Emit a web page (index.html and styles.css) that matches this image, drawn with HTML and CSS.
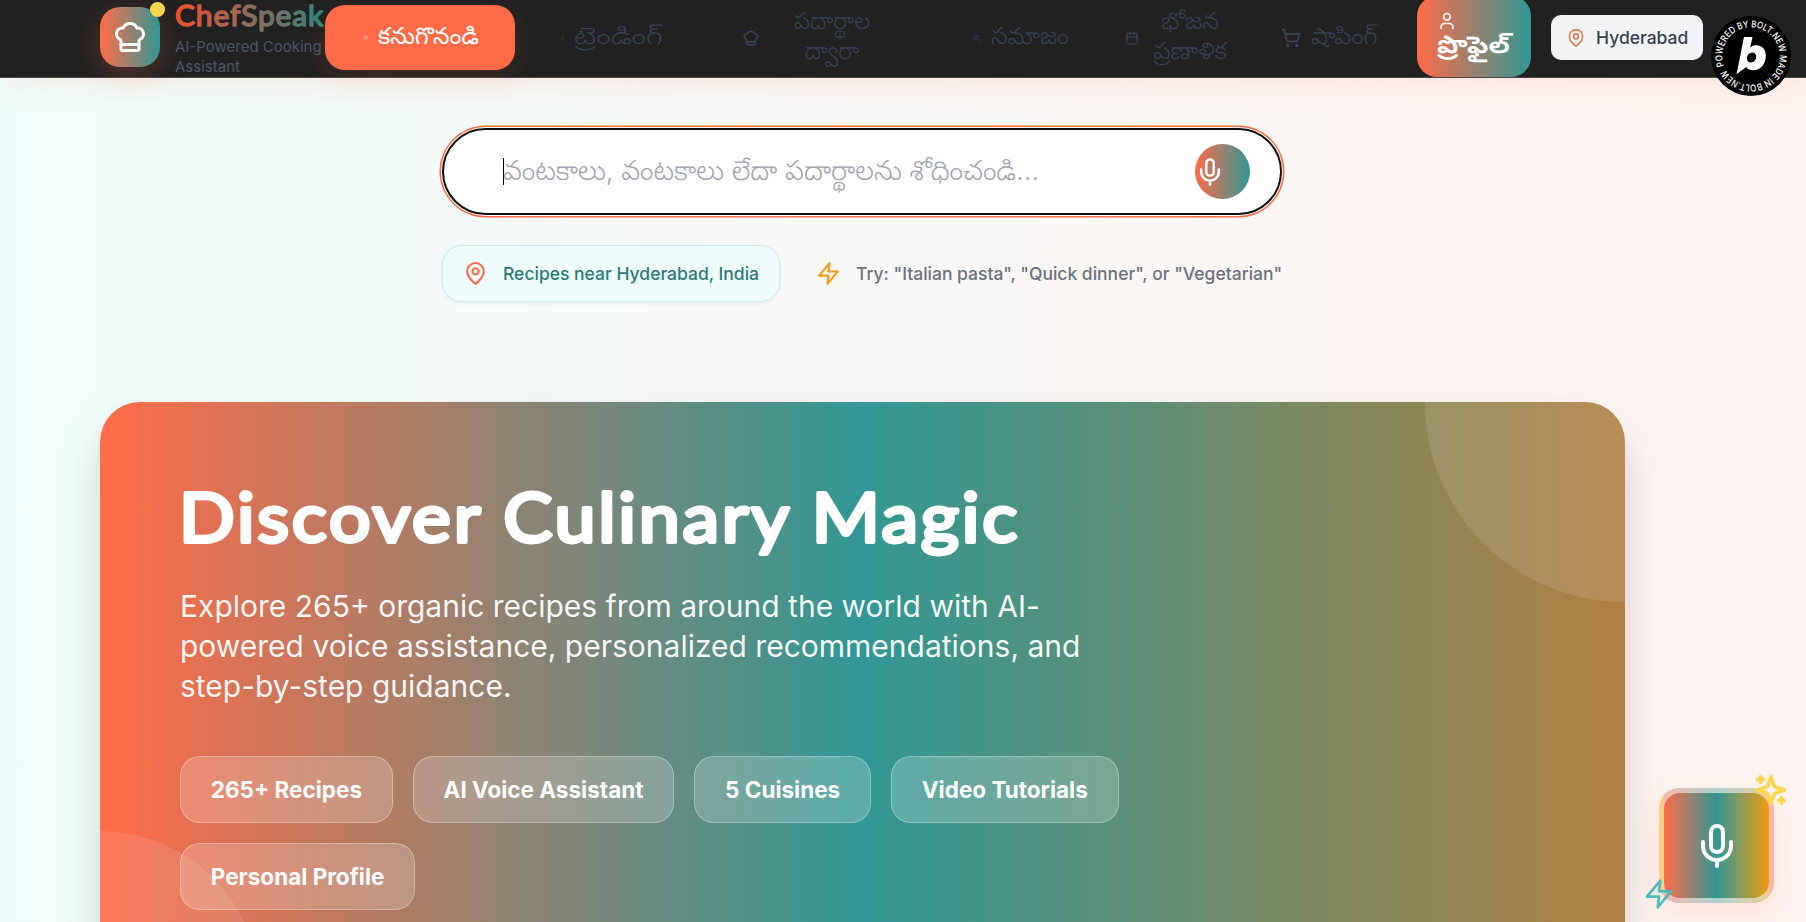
FILE: index.html
```html
<!DOCTYPE html>
<html lang="te">
<head>
<meta charset="utf-8">
<title>ChefSpeak</title>
<link rel="stylesheet" href="styles.css">
</head>
<body>
<svg width="0" height="0" class="defs">
  <symbol id="chef" viewBox="0 0 24 24"><path d="M17 21a1 1 0 0 0 1-1v-5.35c0-.457.316-.844.727-1.041a4 4 0 0 0-2.134-7.589 5 5 0 0 0-9.186 0 4 4 0 0 0-2.134 7.588c.411.198.727.585.727 1.041V20a1 1 0 0 0 1 1Z"/><path d="M6 17h12"/></symbol>
  <symbol id="pin" viewBox="0 0 24 24"><path d="M20 10c0 6-8 12-8 12s-8-6-8-12a8 8 0 0 1 16 0Z"/><circle cx="12" cy="10" r="3"/></symbol>
  <symbol id="mic" viewBox="0 0 24 24"><path d="M12 2a3 3 0 0 0-3 3v7a3 3 0 0 0 6 0V5a3 3 0 0 0-3-3Z"/><path d="M19 10v2a7 7 0 0 1-14 0v-2M12 19v3"/></symbol>
  <symbol id="zap" viewBox="0 0 24 24"><path d="M13 2 3 14h9l-1 8 10-12h-9l1-8Z"/></symbol>
  <symbol id="compass" viewBox="0 0 24 24"><circle cx="11" cy="11" r="8"/><path d="m21 21-4.3-4.3"/></symbol>
  <symbol id="trend" viewBox="0 0 24 24"><path d="m22 7-8.500 8.500-5-5L2 17M16 7h6v6"/></symbol>
  <symbol id="users" viewBox="0 0 24 24"><path d="M16 21v-2a4 4 0 0 0-4-4H6a4 4 0 0 0-4 4v2"/><circle cx="9" cy="7" r="4"/><path d="M22 21v-2a4 4 0 0 0-3-3.870M16 3.130a4 4 0 0 1 0 7.750"/></symbol>
  <symbol id="calendar" viewBox="0 0 24 24"><path d="M8 2v4M16 2v4M3 10h18"/><rect x="3" y="4" width="18" height="18" rx="2"/></symbol>
  <symbol id="cart" viewBox="0 0 24 24"><circle cx="8" cy="21" r="1"/><circle cx="19" cy="21" r="1"/><path d="M2.050 2.050h2l2.660 12.420a2 2 0 0 0 2 1.580h9.780a2 2 0 0 0 1.950-1.570l1.650-7.430H5.120"/></symbol>
  <symbol id="user" viewBox="0 0 24 24"><path d="M19 21v-2a4 4 0 0 0-4-4H9a4 4 0 0 0-4 4v2"/><circle cx="12" cy="7" r="4"/></symbol>
  <symbol id="sparkles" viewBox="0 0 24 24"><path d="m12 3-1.912 5.813a2 2 0 0 1-1.275 1.275L3 12l5.813 1.912a2 2 0 0 1 1.275 1.275L12 21l1.912-5.813a2 2 0 0 1 1.275-1.275L21 12l-5.813-1.912a2 2 0 0 1-1.275-1.275L12 3ZM5 3v4M19 17v4M3 5h4M17 19h4"/></symbol>
</svg>

<header class="header">
  <div class="brand">
    <div class="logo"><svg class="icon"><use href="#chef"/></svg><span class="logo-dot"></span></div>
    <div class="brand-text">
      <svg class="brand-name" viewBox="0 0 151 36">
        <defs><linearGradient id="brand-grad" gradientUnits="userSpaceOnUse" x1="0" y1="0" x2="151" y2="0"><stop offset="0" stop-color="#f0502c"/><stop offset="1" stop-color="#2c8583"/></linearGradient></defs>
        <text x="0" y="25.500" textLength="149" lengthAdjust="spacingAndGlyphs">ChefSpeak</text>
      </svg>
      <div class="brand-sub">AI-Powered Cooking<br>Assistant</div>
    </div>
  </div>
  <nav class="nav">
    <a class="nav-item discover"><svg class="icon"><use href="#compass"/></svg><span>కనుగొనండి</span></a>
    <a class="nav-item trending"><svg class="icon"><use href="#trend"/></svg><span>ట్రెండింగ్</span></a>
    <a class="nav-item ingredients"><svg class="icon"><use href="#chef"/></svg><span>పదార్థాల<br>ద్వారా</span></a>
    <a class="nav-item community"><svg class="icon"><use href="#users"/></svg><span>సమాజం</span></a>
    <a class="nav-item planner"><svg class="icon"><use href="#calendar"/></svg><span>భోజన<br>ప్రణాళిక</span></a>
    <a class="nav-item shopping"><svg class="icon"><use href="#cart"/></svg><span>షాపింగ్</span></a>
  </nav>
  <a class="profile"><svg class="icon"><use href="#user"/></svg><span>ప్రొఫైల్</span></a>
  <div class="city"><svg class="icon"><use href="#pin"/></svg><span>Hyderabad</span></div>
</header>

<svg class="bolt" viewBox="0 0 80 80">
  <defs><path id="ring" d="M40 68.700a28.700 28.700 0 1 1 .01 0"/></defs>
  <circle cx="40" cy="40" r="40"/>
  <text class="bolt-ring" transform="rotate(70 40 40)"><textPath href="#ring" textLength="176" lengthAdjust="spacingAndGlyphs">POWERED BY BOLT.NEW MADE IN BOLT.NEW</textPath></text>
  <path class="bolt-b" d="M33 21h8.500l-2.300 10.500c2-1.600 3.600-2.200 6-2.200 5.800 0 9.600 4.200 9.600 10.200 0 8-5 14.800-12.300 14.800-3.300 0-5.800-1.100-7.200-3.200l-9.800 7.200ZM41.200 36.500c-3.200 0-5.200 3-5.200 5.900 0 2.500 1.500 4.100 3.800 4.100 3.300 0 5.400-2.700 5.400-5.700 0-2.600-1.500-4.300-4-4.300Z"/>
</svg>

<main>
  <section class="search-area">
    <div class="search">
      <span class="caret"></span>
      <span class="placeholder">వంటకాలు, వంటకాలు లేదా పదార్థాలను శోధించండి...</span>
      <button class="mic"><svg class="icon"><use href="#mic"/></svg></button>
    </div>
    <div class="hints">
      <div class="near"><svg class="icon"><use href="#pin"/></svg><span>Recipes near Hyderabad, India</span></div>
      <div class="try"><svg class="icon"><use href="#zap"/></svg><span>Try: "Italian pasta", "Quick dinner", or "Vegetarian"</span></div>
    </div>
  </section>

  <section class="hero-wrap">
    <div class="hero">
      <span class="orb orb-top"></span>
      <span class="orb orb-bottom"></span>
      <h1><svg class="hero-title" viewBox="0 0 860 75"><text x="-1" y="60.500" textLength="841" lengthAdjust="spacingAndGlyphs">Discover Culinary Magic</text></svg></h1>
      <p>Explore 265+ organic recipes from around the world with AI-powered voice assistance, personalized recommendations, and step-by-step guidance.</p>
      <div class="chips">
        <span class="chip">265+ Recipes</span>
        <span class="chip">AI Voice Assistant</span>
        <span class="chip">5 Cuisines</span>
        <span class="chip">Video Tutorials</span>
        <span class="chip">Personal Profile</span>
      </div>
    </div>
  </section>
</main>

<div class="fab">
  <div class="fab-body"><svg class="icon"><use href="#mic"/></svg></div>
  <svg class="icon fab-spark"><use href="#sparkles"/></svg>
  <svg class="icon fab-zap"><use href="#zap"/></svg>
</div>
</body>
</html>
```
FILE: styles.css
```css
* { box-sizing: border-box; margin: 0; padding: 0; }
html { font-size: 20px; height: 922px; overflow: hidden; }
body {
  height: 922px;
  overflow: hidden;
  position: relative;
  font-family: Inter, "Noto Sans Telugu", "Noto Sans", sans-serif;
  background: linear-gradient(90deg, #f0fffd 0%, #f8f8f7 45%, #fff5f2 90%, #fff4f1 100%);
}
main { height: 844px; overflow: hidden; }
.defs { position: absolute; }
.icon {
  display: block;
  flex: none;
  fill: none;
  stroke: currentColor;
  stroke-width: 2;
  stroke-linecap: round;
  stroke-linejoin: round;
  overflow: visible;
}

/* header */
.header {
  position: relative;
  z-index: 2;
  display: flex;
  align-items: center;
  height: 78px;
  padding-left: 100px;
  background: #202120;
  border-bottom: 1px solid #4a4644;
  box-shadow: 0 6px 30px rgba(255, 107, 71, .14);
}
.brand { display: flex; align-items: center; gap: 15px; width: 225px; height: 77px; flex: none; }
.logo {
  position: relative;
  display: grid;
  place-items: center;
  flex: none;
  width: 60px;
  height: 60px;
  margin-top: -3px;
  border-radius: 20px;
  color: #fff;
  background: linear-gradient(90deg, #ff6b47, #319795);
  box-shadow: 0 8px 28px rgba(255, 107, 71, .25);
}
.logo .icon { width: 36px; height: 36px; }
.logo-dot { position: absolute; top: -5px; right: -5px; width: 15px; height: 15px; border-radius: 50%; background: #ffd54a; }
.brand-text { white-space: nowrap; height: 77px; }
.brand-name { display: block; width: 151px; height: 37px; overflow: visible; }
.brand-name text { font: 400 29px Lato, sans-serif; letter-spacing: .8px; fill: url(#brand-grad); stroke: url(#brand-grad); stroke-width: 1.500px; stroke-linejoin: round; }
.brand-sub { font-size: 15px; line-height: 20px; color: #4a5568; }
.nav { display: flex; align-items: center; flex: none; width: 1092px; height: 77px; }
.nav-item { display: flex; align-items: center; flex: none; height: 65px; margin-top: -2px; font-size: 23.500px; line-height: 30px; font-weight: 300; color: #364358; white-space: nowrap; }
.nav-item span { text-align: center; margin-top: -3px; transform-origin: left center; }
.discover { width: 190px; padding-left: 38px; gap: 10px; border-radius: 20px; background: #ff6b47; color: #fff; font-weight: 400; box-shadow: 0 8px 28px rgba(255, 107, 71, .14); }
.discover .icon { width: 5px; height: 5px; }
.trending { width: 227px; padding-left: 43px; gap: 10px; }
.trending span { transform: scaleX(1.260); }
.trending .icon { width: 6px; height: 6px; }
.ingredients { width: 231px; gap: 31px; }
.ingredients .icon { width: 18px; height: 18px; }
.ingredients span { width: 82px; }
.community { width: 152px; gap: 10px; }
.community span { transform: scaleX(1.040); }
.community .icon { width: 8px; height: 8px; }
.planner { width: 156px; gap: 12px; }
.planner .icon { width: 14px; height: 14px; }
.planner span { width: 74px; transform: scaleX(1.060); }
.shopping { gap: 10px; }
.shopping span { transform: scaleX(1.060); }
.shopping .icon { width: 20px; height: 20px; }
.profile {
  display: flex;
  flex-direction: column;
  align-items: flex-start;
  flex: none;
  width: 114px;
  height: 81px;
  margin-top: -4px;
  padding: 15px 0 0 20px;
  border-radius: 20px;
  background: linear-gradient(90deg, #ff6b47, #319795);
  color: #fff;
  font-size: 23px;
  line-height: 29px;
  font-weight: 700;
}
.profile span { transform: scaleX(1.200); transform-origin: left center; }
.profile .icon { width: 20px; height: 20px; }
.city {
  display: flex;
  align-items: center;
  gap: 10px;
  flex: none;
  width: 152px;
  height: 45px;
  margin: -2px 0 0 20px;
  padding-left: 15px;
  border-radius: 10px;
  background: #f3f4f6;
  color: #374151;
  font-size: 17.500px;
  font-weight: 500;
}
.city .icon { width: 20px; height: 20px; color: #e07a4f; }
.bolt { position: absolute; z-index: 3; left: 1711px; top: 16px; width: 80px; height: 80px; }
.bolt-ring { fill: #fff; font: 500 9.500px Inter, sans-serif; }
.bolt-b { fill: #fff; fill-rule: evenodd; }

/* search */
.search-area { width: 840px; margin-left: 442px; padding-top: 50px; }
.search {
  display: flex;
  align-items: center;
  height: 87px;
  padding: 0 30px 0 59px;
  border: 2px solid #101010;
  border-radius: 44px;
  background: #fff;
  box-shadow: 0 0 0 1px #fff, 0 0 0 2.500px #ff6b47;
}
.caret { width: 1px; height: 27px; background: #000; }
.placeholder { flex: 1; margin: -3px 0 0 -1px; font-size: 27.400px; font-weight: 300; line-height: 40px; color: #9ca3af; white-space: nowrap; }
.mic { display: flex; align-items: center; width: 55px; height: 55px; border: 0; border-radius: 50%; background: linear-gradient(90deg, #ff6b47, #319795); color: #fff; }
.mic .icon { width: 30px; height: 30px; }
.hints { display: flex; align-items: center; gap: 36px; margin-top: 30px; }
.near {
  display: flex;
  align-items: center;
  gap: 15px;
  flex: none;
  width: 338px;
  height: 57px;
  padding-left: 20px;
  border: 1px solid #c8efec;
  border-radius: 20px;
  background: #f0fdfd;
  color: #2c7a7b;
  font-size: 17.500px;
  font-weight: 500;
  box-shadow: 0 1px 4px rgba(0, 0, 0, .07);
}
.near .icon { width: 25px; height: 25px; color: #ff6b47; }
.try { display: flex; align-items: center; gap: 15px; color: #6b7280; font-size: 17.500px; font-weight: 500; white-space: nowrap; }
.try .icon { width: 25px; height: 25px; color: #f39c12; }

/* hero */
.hero-wrap { padding: 100px 0 0 100px; }
.hero {
  position: relative;
  overflow: hidden;
  width: 1525px;
  height: 589px;
  padding: 79px 80px;
  border-radius: 40px;
  color: #fff;
  background: linear-gradient(90deg, #ff6b47 0%, #319795 50%, #b08040 100%);
  box-shadow: 0 25px 50px -4px rgba(0, 0, 0, .2);
}
.orb { position: absolute; border-radius: 50%; background: rgba(255, 255, 255, .1); }
.orb-top { width: 400px; height: 400px; top: -200px; right: -200px; }
.orb-bottom { width: 320px; height: 320px; bottom: -160px; left: -160px; }
h1 { height: 75px; }
.hero-title { display: block; width: 860px; height: 75px; overflow: visible; }
.hero-title text { font: 400 68.500px Lato, sans-serif; letter-spacing: 2.600px; fill: #fff; stroke: #fff; stroke-width: 3.900px; stroke-linejoin: round; }
.hero p { width: 930px; margin-top: 30px; font-size: 30px; line-height: 40px; color: rgba(255, 255, 255, .95); }
.chips { position: relative; display: flex; flex-wrap: wrap; gap: 20px; width: 960px; margin-top: 50px; }
.chip {
  height: 67px;
  padding: 15px 29.800px;
  border: 1px solid rgba(255, 255, 255, .3);
  border-radius: 20px;
  background: rgba(255, 255, 255, .2);
  font-size: 22.500px;
  line-height: 35px;
  font-weight: 700;
}

/* voice button */
.fab {
  position: absolute;
  left: 1659px;
  top: 788px;
  width: 115px;
  height: 115px;
  padding: 5px;
  border-radius: 20px;
  background: linear-gradient(90deg, #f6cf8c 0 5px, transparent 5px calc(100% - 5px), #fdb5a8 calc(100% - 5px)), linear-gradient(90deg, #fbb5a8, #aed1cf 50%, #f1cf92);
  box-shadow: 0 12px 30px rgba(255, 107, 71, .14);
}
.fab-body {
  display: grid;
  place-items: center;
  width: 105px;
  height: 105px;
  border-radius: 16px;
  color: #fff;
  background: linear-gradient(90deg, #ff6b47, #319795 50%, #f39c12);
}
.fab-body .icon { width: 48px; height: 48px; }
.fab-spark { position: absolute; left: 94px; top: -16px; width: 36px; height: 36px; color: #ffd54a; stroke-width: 2.400; }
.fab-zap { position: absolute; left: -16px; top: 90px; width: 32px; height: 32px; color: #4fbab8; }
```
